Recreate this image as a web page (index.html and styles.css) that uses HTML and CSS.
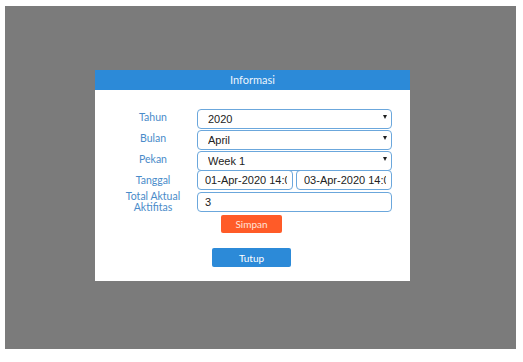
FILE: index.html
```html
<!DOCTYPE html>
<html>
<head>
    <title>Informasi</title>
    <meta charset="utf-8">
    <link rel="stylesheet" href="styles.css">
</head>
<body>
    <div class="overlay">
        <div class="dialog">
            <div class="dialog-header">Informasi</div>

            <div class="dialog-body">
                <div class="form-grid">
                    <label class="field-label">Tahun</label>
                    <div class="select-wrap">
                        <select class="field-select">
                            <option>2020</option>
                        </select>
                    </div>

                    <label class="field-label">Bulan</label>
                    <div class="select-wrap">
                        <select class="field-select">
                            <option>April</option>
                        </select>
                    </div>

                    <label class="field-label">Pekan</label>
                    <div class="select-wrap">
                        <select class="field-select">
                            <option>Week 1</option>
                        </select>
                    </div>

                    <label class="field-label">Tanggal</label>
                    <div class="date-pair">
                        <input class="field-input date-input" type="text" value="01-Apr-2020 14:00">
                        <input class="field-input date-input" type="text" value="03-Apr-2020 14:00">
                    </div>

                    <label class="field-label two-line">Total Aktual Aktifitas</label>
                    <input class="field-input" type="text" value="3">
                </div>

                <button class="btn btn-save">Simpan</button>
                <button class="btn btn-close">Tutup</button>
            </div>
        </div>
    </div>
</body>
</html>
```

FILE: styles.css
```css
body {
    margin: 0;
    background: #ffffff;
    font-family: Lato, "Liberation Sans", sans-serif;
}

.overlay {
    margin: 6px 7px 0 5px;
    height: 343px;
    padding: 64px 0 0 90px;
    box-sizing: border-box;
    background: #7b7b7b;
}

.dialog {
    width: 315px;
    background: #ffffff;
}

.dialog-header {
    height: 20px;
    line-height: 20px;
    background: #2c8ad8;
    color: #eaf4fd;
    font-size: 11px;
    text-align: center;
}

.dialog-body {
    padding: 17px 18px 14px 16px;
    display: flex;
    flex-direction: column;
    align-items: center;
}

.form-grid {
    display: grid;
    grid-template-columns: 84px 195px;
    column-gap: 2px;
    row-gap: 1px;
    align-items: center;
    width: 281px;
}

.field-label {
    text-align: center;
    color: #4a8bc9;
    font-size: 10.5px;
    line-height: 11px;
    padding-top: 1px;
}

.field-label.two-line {
    padding: 0 10px;
}

.select-wrap {
    position: relative;
    height: 20px;
}

.select-wrap::after {
    content: "";
    position: absolute;
    right: 5px;
    top: 8px;
    border-left: 2.5px solid transparent;
    border-right: 2.5px solid transparent;
    border-top: 4px solid #1e1e1e;
    pointer-events: none;
}

.field-select,
.field-input {
    width: 100%;
    height: 20px;
    box-sizing: border-box;
    margin: 0;
    border: 1px solid #6ba7dc;
    border-radius: 4px;
    background: #ffffff;
    color: #222222;
    font-family: "Liberation Sans", Arial, sans-serif;
    font-size: 11px;
    outline: none;
}

.field-select {
    appearance: none;
    -webkit-appearance: none;
    padding: 0 14px 0 10px;
}

.field-input {
    padding: 0 7px;
}

.date-pair {
    display: flex;
    gap: 3px;
}

.date-input {
    width: 96px;
    padding: 0 5px 0 7px;
}

.btn {
    border: none;
    border-radius: 2px;
    color: #ffffff;
    font-family: Lato, "Liberation Sans", sans-serif;
    font-size: 10px;
    cursor: pointer;
    padding: 0;
}

.btn-save {
    margin-top: 2px;
    width: 61px;
    height: 18px;
    background: #ff5b28;
    color: #ffe3d8;
}

.btn-close {
    margin-top: 15px;
    width: 79px;
    height: 19px;
    background: #2c8ad8;
}
```
